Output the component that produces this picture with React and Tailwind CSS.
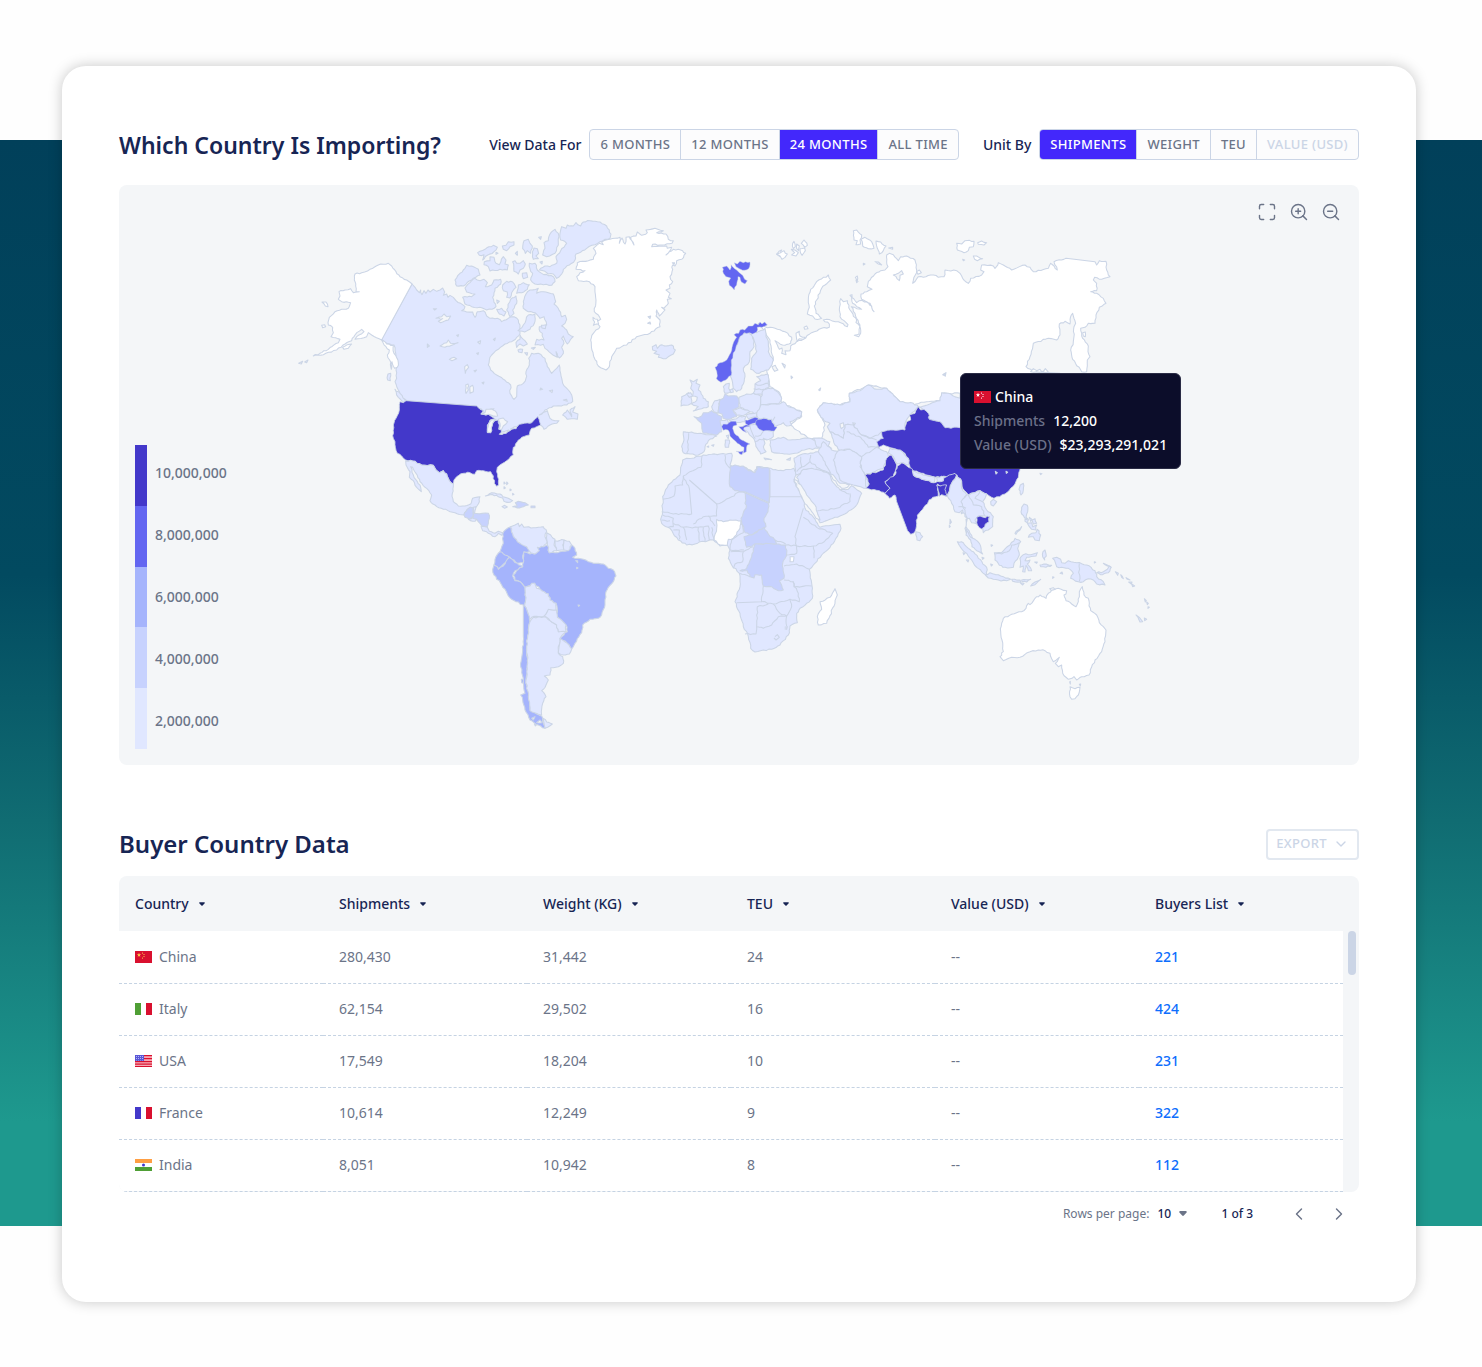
import { useState } from "react";
import { ChevronDown, ChevronLeft, ChevronRight, Maximize, ZoomIn, ZoomOut } from "lucide-react";

const W = "#ffffff";
const L1 = "#e0e7ff";
const L2 = "#c7d2fe";
const L3 = "#a5b4fc";
const L4 = "#6366f1";
const L5 = "#4338ca";
const SEA = "#f4f6f8";

// Each region has its own origin; its shapes are lists of points at three units per map unit.
const regions = [
  {
    x: 171, y: 25,
    shapes: [
      [L1, "366,222 375,232 380,240 388,248 392,240 396,254 402,242 408,250 414,240 420,246 430,238 440,244 450,240 458,234 464,246 460,256 470,252 474,262 480,256 490,262 498,272 512,280 525,290 522,298 515,302 530,306 548,306 555,322 562,305 580,302 590,318 600,325 622,325 635,335 655,325 672,320 685,330 690,345 690,372 680,382 665,395 645,402 625,418 605,435 598,450 595,465 602,480 620,495 640,508 655,518 662,525 660,550 672,568 680,560 682,528 700,520 708,505 708,485 718,465 716,445 725,430 745,430 765,445 772,470 785,490 800,475 808,465 812,490 818,520 835,540 845,555 848,575 830,585 790,588 765,600 748,615 772,602 775,612 780,625 795,632 807,632 800,640 780,645 762,658 752,645 743,620 720,640 688,645 645,672 628,675 600,620 560,588 350,572 330,560 325,540 315,515 320,505 318,480 325,465 318,440 312,405 290,400 275,388"],
      [W, "366,222 350,210 330,200 318,185 305,168 295,160 280,163 265,165 240,178 215,188 195,192 193,210 197,228 198,245 208,245 190,248 182,236 165,240 147,245 150,258 145,268 155,275 182,278 175,295 155,298 135,305 118,322 115,345 128,352 130,368 123,380 150,388 145,398 115,418 90,430 70,438 100,434 140,420 165,402 185,392 195,375 215,358 222,365 200,380 195,388 230,380 235,368 245,375 275,390"],
      [W, "275,390 290,402 310,406 312,430 325,458 322,472 314,475 306,455 304,478 299,450 292,435 298,420 288,410"],
      [W, "96,276 108,276 114,290 106,288"], [W, "95,346 104,344 107,350 98,353"],
      [W, "158,412 172,404 185,402 175,415 162,418"],
      [W, "26,460 38,454 34,462"], [W, "44,456 54,450 50,458"],
      [L1, "294,492 302,490 301,512 293,510"], [L1, "315,538 330,550 345,570 345,578 325,562"],
      [L1, "810,70 815,50 828,55 832,45 850,48 858,38 872,48 880,36 900,32 930,36 950,48 963,72 960,85 930,95 890,115 858,132 855,150 838,165 820,178 815,192 800,205 790,192 775,192 765,184 748,180 765,168 780,170 800,160 798,140 812,122 830,100 812,90"],
      [L1, "795,58 805,70 805,105 795,130 770,140 758,135 765,115 762,98 775,92 780,72"],
      [L1, "563,128 585,118 610,106 622,112 612,125 592,136 578,150 582,134 568,136"],
      [L1, "637,108 648,106 655,95 672,95 672,105 660,110 650,122 640,118"],
      [L1, "583,155 600,152 600,140 612,142 618,160 628,164 640,140 648,150 645,162 655,165 652,180 630,178 600,183 595,170 582,164"],
      [L1, "702,92 715,88 720,100 727,108 722,130 712,122 706,130 698,116"],
      [L1, "732,114 742,116 746,130 738,138 745,146 730,148 728,132"],
      [L1, "668,155 675,152 680,160 690,160 700,152 706,162 700,175 690,180 685,192 672,184"],
      [L1, "718,160 735,160 742,180 755,190 790,200 795,215 785,226 735,222 722,210 728,190 720,176"],
      [L1, "495,210 510,190 525,175 530,166 545,168 565,178 570,195 545,210 520,228 500,228"],
      [L1, "555,205 570,212 582,208 592,218 586,230 605,225 612,210 632,208 632,222 615,235 608,262 618,290 606,298 590,300 570,292 545,290 525,282 518,262 545,260 555,252 530,246 525,234 540,218"],
      [L1, "638,225 650,214 668,216 678,232 665,248 660,264 650,262 652,246 640,242"],
      [L1, "685,225 700,218 718,224 712,238 695,248 680,250"],
      [L1, "662,268 678,258 680,280 668,300 672,310 660,320 650,300"],
      [L1, "620,298 635,295 648,306 642,318 628,312"],
      [L1, "700,275 708,252 720,240 745,235 740,250 760,245 775,248 790,252 797,275 792,282 808,302 815,320 826,316 830,328 825,340 815,348 830,360 835,372 850,380 832,402 820,378 815,385 822,400 815,412 820,430 808,444 798,425 802,442 790,436 765,415 760,403 735,405 740,388 762,390 757,370 750,365 748,350 770,345 762,320 750,325 735,308 715,305 700,295"],
      [L1, "684,362 700,345 715,315 735,312 733,340 720,358 704,366"],
      [L1, "678,398 690,388 690,375 700,388 712,402 700,408 690,402 680,412"],
      [L1, "754,346 768,344 766,356 756,354"], [L1, "684,420 698,418 696,428 686,426"],
      [L1, "697,190 710,188 713,202 700,206"], [L1, "704,428 713,428 711,436"],
      [L1, "845,620 840,600 855,590 848,606 864,612 862,628 845,626 832,628 818,615 832,600"],
      [SEA, "438,325 455,320 462,312 470,320 482,318 475,330 452,338 445,334 458,326"],
      [SEA, "450,408 470,398 475,390 482,400 504,398 485,406 465,412"],
      [SEA, "478,448 492,442 500,446 486,452"], [SEA, "524,470 532,464 536,472 526,490"],
      [SEA, "540,530 548,526 550,545 540,550"], [SEA, "527,525 534,522 535,540 528,550"],
      [SEA, "563,396 572,392 570,402"], [SEA, "430,296 440,296 434,300"],
      [SEA, "820,570 830,568 832,574"], [SEA, "778,542 788,540 786,548"], [SEA, "752,534 758,538 750,540"],
      [SEA, "600,598 612,596 608,600"], [SEA, "576,518 582,516 580,522"], [SEA, "552,482 560,480 555,486"],
      [SEA, "610,388 616,384 614,392"], [SEA, "560,430 566,428 564,434"], [SEA, "412,402 418,408 412,412"], [SEA, "500,376 506,374 504,380"],
      [L1, "746,82 754,80 752,88"], [L1, "676,130 682,124 682,136"], [L1, "750,156 757,154 756,162"], [L1, "724,414 736,412 730,418"],
      [L1, "620,270 628,274 622,280"], [L1, "618,127 624,130 618,133"],
    ],
  },
  {
    x: 261, y: 185,
    shapes: [
      [L5, "60,95 70,98 78,92 290,108 300,118 310,122 303,132 325,133 335,140 345,146 330,150 322,165 322,188 330,188 336,165 345,152 355,150 358,165 356,178 365,180 358,193 375,190 390,182 410,172 418,163 450,160 465,148 473,140 482,165 470,170 455,175 448,195 425,202 412,215 405,230 400,232 400,255 380,272 360,285 352,292 350,305 356,328 356,345 350,349 343,340 340,318 332,305 310,302 290,302 284,313 270,308 250,310 230,320 222,330 220,342 208,332 200,312 190,302 178,308 168,300 160,286 125,285 98,273 77,270 65,258 52,250 45,215 40,205 40,165 48,145 58,120"],
      [SEA, "303,132 315,128 318,118 335,117 350,128 353,138 335,136 325,133"],
      [SEA, "355,148 370,144 383,155 378,162 370,168 364,180 358,176 360,160"],
      [SEA, "322,186 326,160 334,150 348,148 338,160 332,188"],
      [SEA, "360,192 375,184 386,180 378,190"], [SEA, "392,176 410,170 408,176"],
      [L1, "77,272 98,273 125,285 160,286 168,300 178,308 190,302 200,312 208,332 220,342 217,370 220,395 235,408 255,408 272,402 278,385 300,380 298,395 288,412 270,412 262,418 252,435 225,428 190,418 165,405 150,392 155,375 140,355 120,335 108,310 98,292 92,290 100,315 112,335 122,352 124,365 110,352 100,332 88,322 90,305 78,285"],
      [L2, "252,435 262,418 270,412 280,415 280,432 278,440 268,448 255,442"],
      [L1, "280,412 287,410 284,428 280,430"], [L1, "265,448 278,442 290,448 285,454"],
      [L2, "280,430 325,430 328,445 325,460 322,470 305,468 290,448 278,445"],
      [L1, "303,470 322,472 328,484 345,490 355,484 368,488 365,496 355,490 345,500 325,490 308,482"],
      [L1, "316,378 335,368 360,372 375,382 385,385 398,392 390,397 372,394 368,384 350,376 330,374"],
      [L2, "398,410 412,408 406,398 415,394 435,398 445,405 430,410 412,414"],
      [L1, "366,410 374,406 382,411 374,415"], [L2, "453,408 465,408 465,413 453,413"],
      [L1, "372,336 376,340 372,342"], [L1, "380,336 384,340 380,344"], [L1, "372,350 376,354 372,356"], [L1, "390,357 394,360 390,362"], [L1, "398,370 402,373 398,375"],
    ],
  },
  {
    x: 361, y: 315,
    shapes: [
      [L3, "275,135 285,145 290,165 278,172 295,175 310,178 325,185 340,190 370,192 385,205 400,210 408,228 400,245 385,262 378,275 375,315 365,345 355,355 330,358 308,375 305,398 285,430 275,447 262,430 240,415 262,395 258,375 232,350 228,310 210,300 205,282 185,272 164,250 135,262 120,245 105,240 100,225 115,205 128,200 130,155 150,162 168,160 172,145 190,140 202,135 208,158 240,155 262,152"],
      [L3, "92,80 78,88 68,102 70,130 60,155 75,168 90,172 112,190 130,188 128,168 132,155 155,158 140,140 120,130 100,110"],
      [L1, "92,80 105,75 115,70 118,80 125,72 132,82 160,83 190,80 200,95 195,110 202,125 190,140 172,142 178,152 165,162 152,158 140,140 112,125 100,108"],
      [L1, "200,98 212,105 225,118 222,135 230,152 208,158 202,135"],
      [L1, "225,122 252,120 248,135 252,150 230,152"], [L1, "252,120 268,124 275,135 265,152 252,150"],
      [L3, "60,155 75,165 88,172 82,185 68,195 55,205 42,195 45,178"],
      [L3, "42,195 52,200 55,208 75,192 88,172 112,190 128,200 105,212 98,228 105,242 120,245 135,262 137,300 134,318 108,305 85,288 65,255 42,225 38,208"],
      [L1, "135,262 150,258 155,250 164,250 170,265 185,272 205,282 210,300 228,310 228,330 205,330 193,348 155,352 148,360 142,335 134,318 137,300"],
      [L3, "130,316 134,318 142,335 150,365 145,390 140,440 142,490 138,540 148,580 150,630 185,648 190,670 195,685 175,675 150,660 135,630 128,600 122,585 135,580 130,535 122,500 128,450 130,400"],
      [L1, "150,365 160,352 193,350 210,362 230,375 235,395 258,395 240,415 235,450 235,460 248,470 250,490 235,500 212,503 210,525 193,528 205,540 198,555 185,572 198,590 188,610 185,645 150,632 145,590 138,540 143,490 140,440 145,390"],
      [L1, "190,655 195,685 217,672 200,666"],
      [L1, "193,348 205,328 230,330 232,352 258,375 258,395 235,395 230,375 210,362"],
      [L1, "240,415 250,422 262,430 275,447 268,462 250,465 235,458"],
      [SEA, "155,655 165,650 160,660"], [SEA, "170,668 180,660 186,668"], [SEA, "163,672 170,674 166,678"],
      [L3, "124,538 130,538 130,550 125,548"], [L1, "287,182 293,182 293,188"], [L1, "290,202 294,204 290,206"], [L1, "294,315 299,316 296,319"],
    ],
  },
  {
    x: 441, y: 25,
    shapes: [
      [W, "100,115 118,100 130,104 125,96 150,88 180,82 178,100 186,84 195,102 198,82 208,80 222,105 212,82 228,78 232,66 245,76 262,68 258,60 285,55 310,62 290,68 318,72 325,88 340,92 336,100 300,105 278,103 275,110 320,108 322,115 335,112 318,135 340,118 362,120 377,130 365,148 350,152 345,168 338,165 336,185 330,200 338,215 328,225 330,235 318,240 330,250 325,262 334,266 322,268 325,280 312,295 305,292 315,300 298,318 290,300 288,318 300,330 300,350 270,370 230,380 200,405 170,415 155,440 148,470 138,480 115,468 100,435 92,390 100,370 120,350 110,335 122,328 115,315 103,305 108,270 105,230 88,215 55,212 50,200 60,188 75,182 48,178 52,158 85,152 100,148 108,130"],
      [L1, "277,410 288,404 292,415 300,406 318,408 335,405 346,420 340,432 318,446 295,442 298,434 282,430 290,424 278,420"],
      [L4, "487,172 500,168 510,180 513,164 524,176 530,180 538,188 548,196 554,208 562,212 555,222 544,216 540,202 534,200 534,208 530,225 523,240 508,226 506,214 512,204 498,200 490,190"],
      [L4, "523,158 532,162 540,154 550,158 570,156 566,176 548,181 538,176 528,170"],
      [W, "650,133 657,124 665,120 660,140"], [W, "99,322 112,328 116,342 100,346 104,336"],
      [W, "264,320 272,318 270,326"], [W, "263,340 270,336 272,342"], [W, "337,158 344,158 342,164"],
    ],
  },
  {
    x: 641, y: 35,
    shapes: [
      [W, "-5,310 15,320 45,325 75,335 95,352 92,370 75,376 55,368 45,362 58,388 66,384 65,400 78,404 75,392 90,392 92,378 110,365 130,358 155,338 185,325 208,322 208,312 190,300 200,298 235,305 262,320 264,314 240,290 238,270 242,236 250,245 262,242 270,270 290,300 288,308 300,320 302,340 296,350 283,346 297,342 300,315 285,280 274,260 290,266 305,268 278,250 275,232 290,248 298,242 320,245 335,258 342,275 330,250 305,238 303,222 320,215 336,208 322,200 325,184 345,162 362,152 375,150 384,140 380,125 380,105 388,100 400,104 415,122 422,110 440,108 465,120 470,150 466,165 458,190 475,170 490,172 520,165 535,172 552,170 555,150 590,152 600,160 608,175 625,190 632,175 665,165 672,155 662,150 665,135 700,138 705,145 715,128 730,135 755,150 795,135 810,142 820,155 865,145 872,130 892,150 882,125 918,115 1005,125 1010,135 1018,122 1038,124 1040,150 1050,170 1025,178 1004,172 1000,180 1010,190 1010,212 992,215 1010,220 1030,235 1038,250 1018,262 1008,285 1005,310 985,310 975,322 962,325 965,348 985,378 984,395 990,410 982,420 980,455 965,455 938,418 932,390 940,365 942,320 947,310 938,280 934,285 930,312 915,304 898,312 900,345 890,360 865,355 820,370 810,410 798,440 812,448 820,455 900,460 850,560 600,560 600,520 545,520 545,540 500,545 460,555 420,545 380,505 325,495 268,520 270,545 240,555 190,548 172,570 195,615 185,655 145,655 90,615 110,598 125,590 125,575 65,550 60,520 30,500 20,450 40,420 30,360"],
      [W, "190,172 198,172 205,165 212,180 195,195 185,205 170,240 163,258 168,280 185,295 165,297 158,288 142,282 148,262 145,240 152,208 170,185"],
      [W, "280,32 290,30 305,45 300,60 302,72 288,74 292,62 282,60"], [W, "303,58 315,52 335,65 342,85 325,86 308,78"],
      [W, "348,63 362,66 378,78 370,92 358,102 352,85"], [W, "590,70 605,72 615,62 642,64 640,80 628,82 625,92 612,98 592,90"],
      [W, "653,68 665,63 680,68 672,75 655,73"], [W, "640,108 650,108 668,116 652,122 644,118"],
      [W, "50,102 62,98 72,92 76,100 82,102 75,112 66,118 60,108"],
      [W, "98,70 102,64 106,80 100,86"], [W, "94,88 105,90 115,98 108,108 95,105 104,98"], [W, "110,72 118,78 116,92 110,86"],
      [W, "124,70 132,60 142,76 134,82"], [W, "120,86 134,84 136,92 126,106"],
      [W, "108,340 118,334 120,348 136,352 130,358 118,356 112,364"], [W, "132,322 140,318 144,326 134,328"],
      [W, "470,155 478,150 484,158 474,163"], [W, "968,338 976,336 976,350 970,348"],
      [SEA, "36,440 46,436 54,450 44,454"], [SEA, "66,430 76,436 74,444"], [SEA, "93,468 98,472 94,476"],
      [SEA, "400,165 415,160 425,152 430,162 420,166 418,182"], [SEA, "548,464 556,460 556,468"],
      [W, "286,172 292,168 292,182"], [W, "288,180 294,184 290,188"], [W, "310,130 315,132 310,135"], [W, "345,125 355,126 365,135 355,132"], [W, "270,226 276,224 276,232"], [W, "386,84 398,82 398,88"], [W, "608,118 614,120 610,122"],
      [SEA, "176,510 182,504 180,512"],
      [W, "812,455 820,446 830,452 840,448 846,456 856,446 865,456"],
    ],
  },
  {
    x: 521, y: 125,
    shapes: [
      [L1, "300,78 320,65 338,75 342,110 330,125 328,155 310,175 315,200 305,235 290,245 280,235 272,200 272,150 285,115"],
      [L1, "330,60 350,68 375,55 378,80 385,100 385,125 400,150 392,170 385,180 350,190 332,178 335,145 350,125 342,90"],
      [L4, "382,45 374,36 366,42 360,36 355,44 345,40 338,48 325,48 314,60 300,60 296,70 282,74 290,82 278,105 268,135 260,150 240,158 225,172 231,190 229,206 243,217 262,206 274,196 274,150 287,116 297,86 312,68 328,68 338,72 350,66 352,52 366,52"],
      [L1, "250,230 258,222 268,220 266,235 272,245 255,250"], [L1, "270,240 278,236 280,246 272,248"],
      [L1, "150,210 160,215 172,208 168,220 180,225 175,240 182,245 190,265 205,275 205,290 185,296 160,303 175,290 155,282 170,272 172,262 158,258 160,245 152,235 156,222"],
      [L1, "125,260 135,256 145,248 155,255 155,280 145,285 123,288"], [L1, "140,252 152,248 158,258 148,262"],
      [L2, "162,320 175,323 185,318 190,308 205,308 215,302 230,310 246,320 242,335 248,345 245,365 230,375 215,372 190,370 185,340 175,332"],
      [L1, "215,290 225,272 240,268 236,295 234,310 222,305"],
      [L2, "240,270 250,265 255,252 265,258 290,258 297,268 297,290 280,300 290,320 270,328 250,325 246,312 235,308 236,290"],
      [L1, "297,262 320,252 340,250 362,258 362,300 350,312 330,305 300,292"],
      [L1, "278,300 300,293 330,305 318,313 290,316"], [L1, "318,315 350,308 350,320 325,326"],
      [L1, "268,332 290,326 300,318 318,320 315,335 285,340"], [L1, "240,332 262,328 268,342 255,348 242,345"],
      [L1, "130,365 155,366 190,372 230,378 205,392 195,410 192,425 175,435 150,432 130,428 125,410 132,390"],
      [L1, "305,352 325,346 345,342 352,348 370,362 402,362 400,380 380,390 370,385 375,400 370,410 378,425 362,432 352,415 345,395 335,380 318,362"],
      [L4, "245,350 250,342 262,343 268,337 288,334 291,345 280,348 278,355 288,375 305,390 330,402 322,405 319,425 310,430 312,412 300,404 286,393 270,378 264,360 250,361"],
      [L4, "288,424 300,425 310,423 306,434"], [L1, "256,390 268,390 266,412 256,412"], [L1, "259,377 266,375 265,387"],
      [L4, "316,330 330,328 345,322 355,324 352,338 325,347 316,340"], [L4, "348,332 365,325 385,323 398,332 403,345 411,352 403,363 370,363 358,358 346,342"],
      [L4, "296,350 308,350 318,344 332,348 312,353 311,358 320,368 308,362"],
      [L1, "390,390 430,382 450,390 480,388 510,385 530,395 535,415 500,418 480,425 465,430 440,432 420,430 395,425 390,405"],
      [L1, "520,385 545,385 570,395 565,408 575,415 545,412 530,410"],
      [L1, "350,200 365,195 385,195 385,215 388,230 372,240 370,255 340,250 345,235 345,222 362,212"],
      [L1, "370,240 385,235 400,235 412,245 425,265 415,282 362,283 362,262"],
      [L1, "362,285 418,282 430,275 445,290 485,305 480,322 450,335 455,345 440,348 430,338 415,345 405,350 395,328 355,325 350,310"],
      [L1, "372,444 385,446 395,449 376,449"], [L1, "440,449 452,443 450,451"], [L1, "201,410 206,408 206,412"], [L1, "215,406 222,404 220,409"],
    ],
    lines: ["345,222 362,226 385,220", "341,236 372,238", "146,370 142,395 145,420 140,430", "330,350 338,372 346,386", "345,378 362,376 370,364", "345,395 358,388 380,388", "405,320 398,332"],
  },
  {
    x: 521, y: 255,
    shapes: [
      [L1, "128,60 140,55 155,55 190,45 240,42 275,40 275,60 270,75 290,80 310,80 345,98 350,80 385,85 430,92 462,85 468,105 462,125 475,150 490,180 495,205 515,225 528,245 540,262 575,256 600,253 603,265 580,310 545,345 520,375 508,388 515,430 517,475 500,490 480,505 470,520 472,548 450,558 445,585 420,615 395,628 345,636 332,625 325,590 310,560 300,520 285,485 300,440 298,400 275,375 265,355 270,330 262,315 240,318 220,300 180,305 165,312 140,315 115,300 90,265 65,250 62,238 68,215 68,170 85,135 100,120 120,105 125,75"],
      [L2, "270,80 285,75 310,78 325,92 345,98 352,80 388,85 388,188 315,155 285,152 270,140"],
      [L2, "315,158 385,190 384,215 372,235 378,260 335,285 315,278 303,235 318,205"],
      [L2, "312,290 335,285 372,262 385,282 405,300 410,312 350,312 320,322"],
      [L2, "345,312 410,312 437,315 440,340 428,370 432,415 418,422 430,450 415,452 395,440 370,438 365,405 345,404 342,414 330,410 322,392 300,392 320,385 335,350"],
      [W, "230,238 250,245 270,240 305,242 300,265 280,295 265,298 262,315 240,315 222,300 230,265"],
      [W, "450,350 462,350 460,365 450,365"],
      [W, "585,446 592,465 585,490 560,550 535,555 532,530 545,508 540,485 570,472"],
      [L1, "462,55 480,45 535,35 550,5 575,30 600,38 625,30 650,15 680,30 680,110 690,145 655,138 630,130 600,135 572,105 545,90 500,88 468,105"],
      [L1, "470,112 490,88 515,85 545,92 570,105 575,122 590,140 600,150 625,148 635,137 665,160 655,185 640,205 600,228 540,248 530,215 500,170 478,130"],
      [SEA, "462,118 472,122 500,165 525,195 540,240 528,235 515,215 494,190 478,155"],
      [SEA, "568,100 580,105 600,130 630,132 622,142 605,145 590,130"],
    ],
    lines: [
      "186,48 183,82 150,95 130,108 128,135 105,138 102,168 68,178", "130,108 148,145 155,222 100,222 65,215", "148,120 230,192 230,228 190,230 160,252", "230,192 275,170 300,155 315,158", "255,45 258,70 272,85",
      "390,90 390,170 485,170", "390,170 385,190", "490,205 465,290 470,318 437,315", "470,318 520,318 545,310 578,280 530,262 490,232", "520,318 522,355", "405,300 437,312",
      "298,400 330,410", "370,438 365,485 290,488", "365,485 400,492 450,478 455,500 440,528 415,530 395,555 370,565 350,560 352,500 385,492", "350,560 348,582 315,582", "432,420 460,425 462,440 515,438", "458,425 475,460 478,485 465,480 450,478", "400,492 420,520 440,528 440,558",
      "432,378 470,372 508,388", "440,345 470,340 470,318", "303,242 310,278 275,300 270,330 312,330", "272,335 310,335 308,365 285,372 280,385", "310,335 340,320",
      "68,225 100,235 100,260 85,262", "100,250 130,262 140,300", "130,262 175,262 178,305", "175,262 205,258 208,300", "100,270 118,270 118,298", "190,262 195,305", "215,262 222,300", "65,240 90,242", "205,228 225,258", "405,590 412,584 418,592 408,600 402,594", "434,562 442,560 440,568 434,566",
      "480,85 510,65 512,45", "470,95 485,80 482,50", "510,65 545,90 570,100", "535,35 550,60 572,100", "532,212 590,205 630,185 630,160", "600,148 628,162",
    ],
  },
  {
    x: 721, y: 175,
    shapes: [
      [L1, "-68,150 -50,128 0,135 30,125 28,100 60,92 85,75 110,88 140,85 180,125 220,130 235,140 210,165 195,190 195,210 130,215 115,245 90,235 65,225 40,195 15,195 10,235 -30,215 -38,200 -30,190 -48,182 -60,165"],
      [L1, "-30,215 10,235 15,195 40,195 65,225 90,235 115,225 130,215 180,212 130,245 110,262 85,285 65,290 30,268 0,272 -15,255"],
      [L1, "-5,272 30,268 65,290 60,320 75,345 80,385 40,375 0,360 -20,300"],
      [L1, "65,290 110,262 140,275 145,290 130,325 75,345 60,310"],
      [L1, "235,140 262,135 300,122 305,98 325,100 360,115 480,115 480,200 360,205 315,203 300,185 268,178 262,158"],
      [L5, "235,140 242,150 252,148 265,160 268,178 300,185 315,203 360,203 450,200 540,180 540,330 535,352 525,372 512,385 495,402 462,415 440,402 420,392 385,405 368,385 365,365 350,345 320,350 285,352 250,340 215,330 205,310 195,280 160,265 130,255 115,265 110,245 130,235 125,215 160,210 195,210 200,185 212,180 208,165 225,160"],
      [L5, "155,285 170,315 160,350 135,365 150,385 135,400 118,392 78,385 88,372 75,345 130,330 140,295"],
      [L5, "172,318 185,308 215,325 225,350 285,368 320,350 345,340 352,350 335,370 325,400 318,410 308,380 292,372 295,408 278,412 265,425 248,448 232,465 230,490 225,515 212,523 200,505 170,425 165,405 148,415 135,400 150,385 135,365 165,345"],
      [L1, "150,265 180,270 205,295 207,315 190,308 172,312 160,290 145,278"],
      [L1, "217,332 250,345 285,352 282,368 245,358 220,345"], [L1, "290,352 312,350 310,362 292,364"],
      [L5, "290,375 302,378 320,375 315,388 322,408 305,404 298,409"],
      [L1, "350,345 365,365 365,385 380,405 365,425 378,450 382,475 375,470 368,450 358,458 345,455 335,430 322,408 335,370"],
      [L1, "380,405 420,392 440,402 435,415 428,425 440,450 460,470 458,500 430,518 428,505 440,490 448,470 415,468 405,480 410,492 395,488 388,475 378,478 378,500 390,520 400,540 386,530 375,505 382,475 375,450 363,425"],
      [L5, "410,472 420,468 430,472 448,470 447,485 436,492 434,500 425,507 418,503 412,495"],
      [L1, "452,425 460,418 470,425 460,438 453,434"], [L1, "541,375 550,370 550,390 543,405 537,388"],
      [L1, "228,515 240,518 248,530 240,542 231,540"],
      [SEA, "466,334 472,338 468,342"], [SEA, "498,334 503,337 499,340"],
      [SEA, "0,192 10,188 12,200 4,206"], [SEA, "38,188 46,190 42,196"],
      [W, "312,42 318,38 316,48"], [L1, "330,478 334,486 330,492"], [L1, "364,457 368,459 364,461"], [L1, "600,340 606,341 602,344"],
    ],
    lines: ["20,215 62,232 85,262 110,262", "65,225 110,240", "385,405 400,435 425,440 435,468", "420,392 405,415 428,425", "355,440 378,445"],
  },
  {
    x: 821, y: 295,
    shapes: [
      [L1, "52,185 70,188 85,205 100,215 115,235 140,262 140,285 125,275 110,262 95,240 80,220 62,202"],
      [L1, "136,285 150,278 175,284 190,290 212,298 200,302 175,300 145,294"],
      [L1, "78,145 85,158 92,172 105,178 118,190 128,222 110,212 96,200 92,180 78,165"],
      [L1, "163,218 185,218 210,195 225,175 242,185 233,205 238,225 222,250 220,262 195,262 178,256 165,240"],
      [L1, "240,235 250,224 280,222 292,218 288,228 260,232 255,242 270,240 262,252 275,272 265,272 258,256 255,276 248,275 250,258 240,262"],
      [L1, "338,235 350,232 362,238 365,248 375,250 385,242 410,248 440,255 465,272 470,290 490,305 495,315 470,312 460,300 445,296 430,305 415,305 392,295 400,280 385,265 365,262 350,260 346,248"],
      [L1, "470,278 490,275 502,268 508,258 514,262 505,278 488,284"], [L1, "490,250 500,254 512,260 502,258"],
      [L1, "245,82 252,72 262,76 263,95 258,112 266,118 254,114 245,102"],
      [L1, "255,118 265,120 262,128 255,124"], [L1, "268,112 276,118 272,124"], [L1, "276,120 285,116 290,130 280,132"], [L1, "262,130 275,128 278,140 290,135 288,150 275,148 268,140"],
      [L1, "268,165 275,160 288,158 292,148 302,165 298,182 285,180 280,170 265,172"], [L1, "225,160 245,140 240,150 228,163"],
      [L1, "309,215 315,210 318,222 314,240 308,230"], [L1, "215,298 240,300 242,305 218,304"], [L1, "245,300 272,298 260,306 246,305"], [L1, "272,318 285,306 302,298 285,314"], [L1, "240,308 252,310 248,315"],
      [L1, "300,255 318,252 335,256 318,262 302,260"], [L1, "284,246 292,246 290,250"], [L1, "360,280 366,276 368,282"], [L1, "338,290 342,292 338,295"],
      [L1, "526,275 535,280 533,286"], [L1, "542,284 550,296 545,292"], [L1, "558,293 570,300 562,298"], [L1, "566,306 576,306 574,312"], [L1, "575,312 584,318 578,320"],
      [L1, "613,356 619,362 616,366"], [L1, "620,366 625,370 622,374"], [L1, "588,405 598,412 608,425 600,426"], [L1, "613,414 620,418 614,422"], [L1, "624,380 628,382 624,385"],
      [L1, "79,240 86,240 84,246"], [L1, "69,218 75,220 71,224"], [L1, "126,232 132,234 128,238"], [L1, "152,252 158,254 154,258"], [L1, "463,245 467,247 463,249"], [L1, "153,194 158,196 154,199"], [L1, "30,122 33,128 30,130"], [L1, "28,135 31,140 28,142"],
      [W, "190,415 215,403 245,395 258,385 265,370 270,374 285,355 300,345 318,355 325,340 335,330 355,325 380,332 378,342 372,345 378,362 395,372 408,380 415,365 418,335 427,320 432,345 445,355 452,392 470,405 478,428 490,440 498,450 495,485 485,515 465,540 447,585 425,590 410,600 402,590 396,595 385,598 368,580 365,555 355,560 346,550 358,532 340,545 330,520 315,512 295,510 270,515 240,532 215,532 190,542 180,530 190,515 186,480 182,455 185,430"],
      [W, "390,620 405,626 420,622 415,645 405,656 395,658 390,650"], [W, "329,326 340,323 345,328 334,331"], [W, "389,606 391,604 391,612"], [W, "418,613 422,612 421,618"],
    ],
    lines: ["418,250 418,304", "165,222 185,222 208,212 215,195 238,188"],
  },
];

const noise = (a, b) => {
  const n = Math.sin(a * 12.9898 + b * 78.233) * 43758.5453;
  return (n - Math.floor(n)) * 2 - 1;
};

// Breaks medium-length edges into small steps so that coasts look natural; long borders stay straight.
const outline = (text, closed) => {
  const pts = text.split(" ").map((p) => p.split(",").map(Number));
  const out = [];
  const count = closed ? pts.length : pts.length - 1;
  for (let i = 0; i < count; i++) {
    const [ax, ay] = pts[i];
    const [bx, by] = pts[(i + 1) % pts.length];
    out.push(`${ax},${ay}`);
    const len = Math.hypot(bx - ax, by - ay);
    if (len < 14 || len > 75) continue;
    const steps = Math.ceil(len / 9);
    const flip = ax < bx || (ax === bx && ay < by);
    for (let s = 1; s < steps; s++) {
      const t = s / steps;
      const k = flip ? s : steps - s;
      const n = noise(ax + bx + k, ay + by) * 2.2 * (flip ? 1 : -1);
      const x = ax + (bx - ax) * t - ((by - ay) / len) * n;
      const y = ay + (by - ay) * t + ((bx - ax) / len) * n;
      out.push(`${x.toFixed(1)},${y.toFixed(1)}`);
    }
  }
  if (!closed) out.push(pts[pts.length - 1].join(","));
  return "M" + out.join("L") + (closed ? "Z" : "");
};

function WorldMap() {
  return (
    <svg viewBox="0 0 1240 580" className="block h-auto w-full" role="img" aria-label="World map of imports by country">
      {regions.map((r) => (
        <g key={`${r.x}-${r.y}`} transform={`translate(${r.x} ${r.y}) scale(0.33333)`} stroke="#cbd5e6" strokeWidth="3.2" strokeLinejoin="round">
          {r.shapes.map(([fill, pts], i) => (
            <path key={i} fill={fill} strokeWidth={fill === L4 ? 1.4 : fill === L5 ? 2.6 : 3.2} d={outline(pts, true)} />
          ))}
          {(r.lines || []).map((pts, i) => (
            <path key={`l${i}`} fill="none" d={outline(pts, false)} />
          ))}
        </g>
      ))}
    </svg>
  );
}

const Star = ({ fill }) => (
  <g fill={fill}>
    <path d="M4 1.8l.6 1.4 1.5.1-1.2 1 .4 1.5L4 5l-1.3.8.4-1.5-1.2-1 1.5-.1z" />
    <rect x="7" y="1.6" width="1" height="1" />
    <rect x="8.5" y="3" width="1" height="1" />
    <rect x="8.5" y="5" width="1" height="1" />
    <rect x="7" y="6.6" width="1" height="1" />
  </g>
);

function Flag({ code, star = "#fbc94a" }) {
  return (
    <svg viewBox="0 0 17 12" className="h-3 w-[17px] shrink-0" aria-hidden="true">
      {code === "cn" && (<><rect width="17" height="12" fill="#d9102f" /><Star fill={star} /></>)}
      {code === "it" && (<><rect width="17" height="12" fill="#fff" /><rect width="6" height="12" fill="#4f9f35" /><rect x="11" width="6" height="12" fill="#d9102f" /></>)}
      {code === "fr" && (<><rect width="17" height="12" fill="#fff" /><rect width="6" height="12" fill="#4338ca" /><rect x="11" width="6" height="12" fill="#d9102f" /></>)}
      {code === "us" && (
        <>
          <rect width="17" height="12" fill="#f7a8b3" />
          {[0, 3, 6, 8.5, 11].map((y) => <rect key={y} y={y} width="17" height="1.2" fill="#d9102f" />)}
          <rect width="9" height="6" fill="#5a55d6" />
          {[1, 3, 5, 7].map((x) => <path key={x} d={`M${x + 0.5} 1v4.5`} stroke="#c7d2fe" strokeWidth=".8" strokeDasharray="1 1" />)}
        </>
      )}
      {code === "in" && (
        <>
          <rect width="17" height="12" fill="#fff" /><rect width="17" height="4" fill="#ff9f43" /><rect y="8" width="17" height="4" fill="#4f9f35" />
          <circle cx="8.5" cy="6" r="1.5" fill="#4338ca" />
        </>
      )}
    </svg>
  );
}

const Caret = ({ className }) => (
  <svg viewBox="0 0 8 5" className={className} aria-hidden="true">
    <path d="M1.2 0h5.6a1 1 0 0 1 .8 1.6L4.8 4.5a1.1 1.1 0 0 1-1.6 0L.4 1.6A1 1 0 0 1 1.2 0z" fill="currentColor" />
  </svg>
);

function Segmented({ label, options, value, onChange, disabled }) {
  return (
    <div className="flex items-center gap-2" role="group" aria-label={label}>
      <span className="text-sm font-medium whitespace-nowrap text-[#172554]">{label}</span>
      <div className="flex h-[31px] divide-x divide-[#cbd5e6] overflow-hidden rounded border border-[#cbd5e6] bg-[#fcfcfd]">
        {options.map((o) => (
          <button
            key={o}
            type="button"
            disabled={o === disabled}
            aria-pressed={o === value}
            onClick={() => onChange(o)}
            className={
              "px-[10px] text-[13px] font-medium tracking-wide whitespace-nowrap " +
              (o === value ? "bg-[#4328fb] text-white" : o === disabled ? "text-[#cbd5e6]" : "text-[#6b7488]")
            }
          >
            {o}
          </button>
        ))}
      </div>
    </div>
  );
}

const legend = [
  ["10,000,000", "bg-[#4338ca]"],
  ["8,000,000", "bg-[#6366f1]"],
  ["6,000,000", "bg-[#a5b4fc]"],
  ["4,000,000", "bg-[#c7d2fe]"],
  ["2,000,000", "bg-[#e0e7ff]"],
];

const columns = ["Country", "Shipments", "Weight (KG)", "TEU", "Value (USD)", "Buyers List"];
const rows = [
  ["cn", "China", "280,430", "31,442", "24", "--", "221"],
  ["it", "Italy", "62,154", "29,502", "16", "--", "424"],
  ["us", "USA", "17,549", "18,204", "10", "--", "231"],
  ["fr", "France", "10,614", "12,249", "9", "--", "322"],
  ["in", "India", "8,051", "10,942", "8", "--", "112"],
];

export default function App() {
  const [period, setPeriod] = useState("24 MONTHS");
  const [unit, setUnit] = useState("SHIPMENTS");
  return (
    <div className="min-h-screen bg-[#fefefe] bg-[linear-gradient(to_bottom,#fefefe_140px,#01405a_140px,#024a60_42%,#106c72_60%,#1e998e_82%,#1e998e_1226px,#fefefe_1226px)] py-[66px] pr-[66px] pl-[62px] font-['Noto_Sans',sans-serif]">
      <main className="rounded-3xl bg-white px-[57px] pt-[63px] pb-[76px] shadow-[0_0_14px_rgba(0,0,0,0.22)]">
        <header className="flex items-start justify-between">
          <h1 className="text-[23px] leading-8 font-semibold whitespace-nowrap text-[#172554]">Which Country Is Importing?</h1>
          <div className="flex items-center gap-6">
            <Segmented label="View Data For" options={["6 MONTHS", "12 MONTHS", "24 MONTHS", "ALL TIME"]} value={period} onChange={setPeriod} />
            <Segmented label="Unit By" options={["SHIPMENTS", "WEIGHT", "TEU", "VALUE (USD)"]} value={unit} onChange={setUnit} disabled="VALUE (USD)" />
          </div>
        </header>

        <section className="relative mt-6 overflow-hidden rounded-lg bg-[#f4f6f8]" aria-label="Import map">
          <WorldMap />
          <div className="absolute top-[17px] right-[18px] flex gap-3 text-[#6b7488]">
            <button type="button" aria-label="Full screen"><Maximize size={20} strokeWidth={1.7} /></button>
            <button type="button" aria-label="Zoom in"><ZoomIn size={20} strokeWidth={1.7} /></button>
            <button type="button" aria-label="Zoom out"><ZoomOut size={20} strokeWidth={1.7} /></button>
          </div>
          <div className="absolute bottom-[13px] left-4 flex items-center gap-2">
            <div className="flex h-[304px] w-3 flex-col">
              {legend.map(([t, c]) => <div key={t} className={"flex-1 " + c} />)}
            </div>
            <ul className="text-sm leading-[62px] font-medium text-[#6b7488]">
              {legend.map(([t]) => <li key={t}>{t}</li>)}
            </ul>
          </div>
          <div role="tooltip" className="absolute top-[188px] left-[841px] rounded-md border border-[#2a2b45] bg-[#0c0d2a] px-[13px] py-[11px] text-sm leading-6 font-medium whitespace-nowrap text-white">
            <p className="flex items-center gap-1"><Flag code="cn" star="#fff" />China</p>
            <p><span className="mr-2 text-[#6b7088]">Shipments</span>12,200</p>
            <p><span className="mr-2 text-[#6b7088]">Value (USD)</span>$23,293,291,021</p>
          </div>
        </section>

        <section className="mt-[63px]">
          <div className="flex items-center justify-between">
            <h2 className="text-2xl leading-8 font-semibold text-[#172554]">Buyer Country Data</h2>
            <button type="button" disabled className="flex h-[31px] items-center gap-1.5 rounded border-2 border-[#e2e8f0] px-2 text-[13px] font-medium tracking-wide text-[#cbd5e6]">
              EXPORT <ChevronDown size={16} strokeWidth={2} />
            </button>
          </div>

          <div className="relative mt-4 overflow-hidden rounded-lg bg-[#f4f6f8] pr-4">
            <table className="w-full table-fixed border-collapse text-left text-sm">
              <thead>
                <tr className="h-[55px]">
                  {columns.map((c) => (
                    <th key={c} scope="col" className="p-0 pl-4 font-medium text-[#172554]">
                      <button type="button" className="flex items-center gap-[10px]">{c}<Caret className="h-1 w-1.5" /></button>
                    </th>
                  ))}
                </tr>
              </thead>
              <tbody>
                {rows.map(([code, name, ...cells]) => (
                  <tr key={code} className="h-[52px] border-b border-dashed border-[#c5d3e3] bg-white text-[#6b7488]">
                    <td className="p-0 pl-4"><span className="flex items-center gap-[7px]"><Flag code={code} />{name}</span></td>
                    {cells.map((c, i) => (
                      <td key={i} className="p-0 pl-4">
                        {i === 4 ? <a href="#buyers" className="font-medium text-[#0d6efd]">{c}</a> : c}
                      </td>
                    ))}
                  </tr>
                ))}
              </tbody>
            </table>
            <div className="absolute top-[55px] right-[3px] h-11 w-2 rounded-full bg-[#cbd5e6]" />
          </div>

          <footer className="mt-[10px] flex h-6 items-center justify-end pr-[10px] text-xs text-[#6b7488]">
            <label htmlFor="rows-per-page">Rows per page:</label>
            <span className="relative ml-2 flex items-center">
              <select id="rows-per-page" defaultValue="10" className="w-[34px] appearance-none bg-transparent font-medium text-[#172554]">
                <option>10</option>
                <option>25</option>
                <option>50</option>
              </select>
              <Caret className="pointer-events-none absolute right-1 h-[5px] w-2" />
            </span>
            <span className="ml-[30px] font-medium text-[#172554]">1 of 3</span>
            <button type="button" aria-label="Previous page" className="ml-9"><ChevronLeft size={20} strokeWidth={1.7} /></button>
            <button type="button" aria-label="Next page" className="ml-5"><ChevronRight size={20} strokeWidth={1.7} /></button>
          </footer>
        </section>
      </main>
    </div>
  );
}
